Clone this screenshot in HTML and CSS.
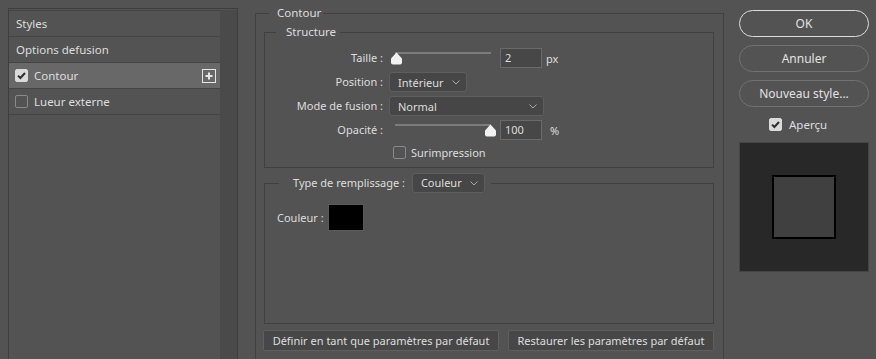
FILE: index.html
```html
<!DOCTYPE html>
<html lang="fr">
<head>
<meta charset="utf-8">
<title>Style de calque</title>
<link rel="stylesheet" href="styles.css">
</head>
<body>
<div class="app">
  <aside class="styles-panel">
    <div class="list">
      <div class="row">Styles</div>
      <div class="row">Options defusion</div>
      <div class="row selected">
        <span class="cb checked"><svg viewBox="0 0 13 13" width="13" height="13"><path d="M3 6.6 L5.4 9 L10 4" fill="none" stroke="#2e2e2e" stroke-width="2"/></svg></span>
        <span class="row-label">Contour</span>
        <span class="plus"><svg viewBox="0 0 14 14" width="14" height="14"><rect x="0.5" y="0.5" width="13" height="13" fill="none" stroke="#e6e6e6"/><path d="M7 3.5 V10.5 M3.5 7 H10.5" stroke="#e6e6e6" stroke-width="2"/></svg></span>
      </div>
      <div class="row">
        <span class="cb"></span>
        <span class="row-label">Lueur externe</span>
      </div>
    </div>
    <div class="scroll"></div>
  </aside>

  <fieldset class="contour">
    <legend class="legend-contour">Contour</legend>
    <fieldset class="structure">
      <legend class="legend-structure">Structure</legend>
      <div class="grid">
        <div class="lbl">Taille :</div>
        <div class="ctrl">
          <div class="slider">
            <div class="track"></div>
            <svg class="thumb thumb-min" viewBox="0 0 13 13" width="13" height="13"><path d="M6.5 0.5 L12 6.5 V10.5 Q12 12.5 10 12.5 H3 Q1 12.5 1 10.5 V6.5 Z" fill="#f2f2f2"/></svg>
          </div>
          <div class="num">2</div>
          <span class="unit">px</span>
        </div>

        <div class="lbl">Position :</div>
        <div class="ctrl">
          <div class="select sel-position"><span>Intérieur</span><svg class="chev" viewBox="0 0 8 5" width="8" height="5"><path d="M0.5 0.5 L4 4 L7.5 0.5" fill="none" stroke="#a8a8a8"/></svg></div>
        </div>

        <div class="lbl">Mode de fusion :</div>
        <div class="ctrl">
          <div class="select sel-mode"><span>Normal</span><svg class="chev" viewBox="0 0 8 5" width="8" height="5"><path d="M0.5 0.5 L4 4 L7.5 0.5" fill="none" stroke="#a8a8a8"/></svg></div>
        </div>

        <div class="lbl">Opacité :</div>
        <div class="ctrl">
          <div class="slider">
            <div class="track"></div>
            <svg class="thumb thumb-max" viewBox="0 0 13 13" width="13" height="13"><path d="M6.5 0.5 L12 6.5 V10.5 Q12 12.5 10 12.5 H3 Q1 12.5 1 10.5 V6.5 Z" fill="#f2f2f2"/></svg>
          </div>
          <div class="num">100</div>
          <span class="unit unit-pct">%</span>
        </div>

        <div></div>
        <div class="ctrl check-line">
          <span class="cb"></span>
          <span>Surimpression</span>
        </div>
      </div>
    </fieldset>

    <fieldset class="fill">
      <legend class="legend-fill">
        <span>Type de remplissage :</span>
        <span class="select sel-fill"><span>Couleur</span><svg class="chev" viewBox="0 0 8 5" width="8" height="5"><path d="M0.5 0.5 L4 4 L7.5 0.5" fill="none" stroke="#a8a8a8"/></svg></span>
      </legend>
      <div class="color-line">
        <span>Couleur :</span>
        <span class="swatch"></span>
      </div>
    </fieldset>

    <div class="defaults">
      <button class="btn btn-def">Définir en tant que paramètres par défaut</button>
      <button class="btn btn-rest">Restaurer les paramètres par défaut</button>
    </div>
  </fieldset>

  <div class="actions">
    <button class="pill pill-ok">OK</button>
    <button class="pill">Annuler</button>
    <button class="pill">Nouveau style...</button>
    <div class="preview-check">
      <span class="cb checked"><svg viewBox="0 0 13 13" width="13" height="13"><path d="M3 6.6 L5.4 9 L10 4" fill="none" stroke="#2e2e2e" stroke-width="2"/></svg></span>
      <span>Aperçu</span>
    </div>
    <div class="preview">
      <div class="preview-square"></div>
    </div>
  </div>
</div>
</body>
</html>
```

FILE: styles.css
```css
* { box-sizing: border-box; }

html, body {
  margin: 0;
  height: 359px;
  overflow: hidden;
  background: #535353;
}

body {
  font-family: "Noto Sans", "Segoe UI", sans-serif;
  font-size: 11px;
  color: #dedede;
}

.app {
  display: flex;
  align-items: flex-start;
  padding-left: 8px;
}

/* Left styles list */
.styles-panel {
  margin-top: 8px;
  width: 230px;
  height: 360px;
  border: 1px solid #3e3e3e;
  padding-top: 1px;
  display: flex;
}

.list {
  width: 211px;
  border-top: 1px solid #444444;
}

.scroll {
  width: 17px;
  background: #4a4a4a;
}

.row {
  height: 26px;
  border-bottom: 1px solid #444444;
  display: flex;
  align-items: center;
  padding-left: 7px;
  font-size: 11.5px;
}

.row.selected {
  background: #686868;
}

.row .cb {
  margin-left: -1px;
  margin-right: 6px;
}

.row-label { flex: 1; }

.plus {
  display: flex;
  margin-right: 4px;
}

.cb {
  width: 13px;
  height: 13px;
  border: 1px solid #8a8a8a;
  border-radius: 2px;
  display: inline-flex;
  flex: none;
}

.cb.checked {
  background: #dadada;
  border-color: #dadada;
}

.cb.checked svg {
  margin: -1px;
}

/* Fieldsets */
fieldset {
  margin: 0;
  min-width: 0;
  border: 1px solid #404040;
}

legend {
  line-height: 18px;
}

.contour {
  margin: 4px 0 0 17px;
  width: 469px;
  padding: 0 9px 10px 8px;
}

.legend-contour {
  margin-left: 5px;
  padding: 0 2px 0 8px;
  font-size: 11.5px;
}

.structure {
  margin-top: 1px;
  padding: 7px 0 7px 0;
}

.legend-structure {
  margin-left: 11px;
  padding: 0 4px 0 10px;
  font-size: 11.5px;
}

.grid {
  display: grid;
  grid-template-columns: 118px auto;
  grid-template-rows: 20px 20px 20px 20px 16px;
  column-gap: 6px;
  row-gap: 4px;
}

.lbl {
  text-align: right;
  line-height: 20px;
}

.ctrl {
  display: flex;
  align-items: center;
}

.slider {
  position: relative;
  width: 105px;
  height: 20px;
  align-self: flex-start;
}

.track {
  margin: 4px 0 0 6px;
  width: 96px;
  height: 2px;
  background: #7c7c7c;
}

.thumb {
  position: absolute;
  top: 4px;
}

.thumb-min { left: 1px; }
.thumb-max { left: 95px; }

.num {
  margin-left: 6px;
  width: 42px;
  height: 20px;
  background: #474747;
  border: 1px solid #6a6a6a;
  padding-left: 4px;
  line-height: 18px;
}

.unit { margin-left: 4px; }
.unit-pct { margin-left: 8px; }

.select {
  height: 20px;
  background: #464646;
  border: 1px solid #5e5e5e;
  border-radius: 3px;
  display: inline-flex;
  align-items: center;
  justify-content: space-between;
  padding: 0 6px 0 8px;
}

.chev { flex: none; }

.sel-position { width: 78px; }
.sel-mode { width: 155px; }
.sel-fill { width: 73px; margin-left: 7px; }

.check-line {
  padding-left: 4px;
  gap: 5px;
}

.fill {
  margin-top: 5px;
  padding: 11px 0 92px 12px;
}

.legend-fill {
  margin-left: 2px;
  padding: 0 6px 0 14px;
  display: flex;
  align-items: center;
  line-height: 20px;
  height: 20px;
}

.color-line {
  display: flex;
  align-items: center;
  gap: 4px;
}

.swatch {
  width: 36px;
  height: 27px;
  background: #000;
  border: 1px solid #5a5a5a;
}

.defaults {
  margin-top: 6px;
  margin-left: -1px;
  display: flex;
  gap: 9px;
}

.btn {
  height: 21px;
  background: #474747;
  border: 1px solid #5f5f5f;
  border-radius: 2px;
  color: #dedede;
  font: inherit;
  padding: 0;
}

.btn-def { width: 236px; }
.btn-rest { width: 206px; }

/* Right actions */
.actions {
  margin: 10px 0 0 15px;
  width: 130px;
  display: flex;
  flex-direction: column;
}

.pill {
  height: 27px;
  border: 1px solid #727272;
  border-radius: 14px;
  background: transparent;
  color: #e2e2e2;
  font: inherit;
  font-size: 12px;
  padding: 0;
  margin-bottom: 8px;
}

.pill-ok {
  border-color: #dcdcdc;
}

.preview-check {
  margin-top: 3px;
  padding-left: 30px;
  display: flex;
  align-items: center;
  gap: 7px;
  height: 13px;
  font-size: 11.5px;
}

.preview {
  margin-top: 11px;
  width: 130px;
  height: 130px;
  background: #282828;
  border: 1px solid #454545;
  display: flex;
  align-items: center;
  justify-content: center;
}

.preview-square {
  width: 64px;
  height: 64px;
  border: 2px solid #000;
  background: #404040;
}
```
